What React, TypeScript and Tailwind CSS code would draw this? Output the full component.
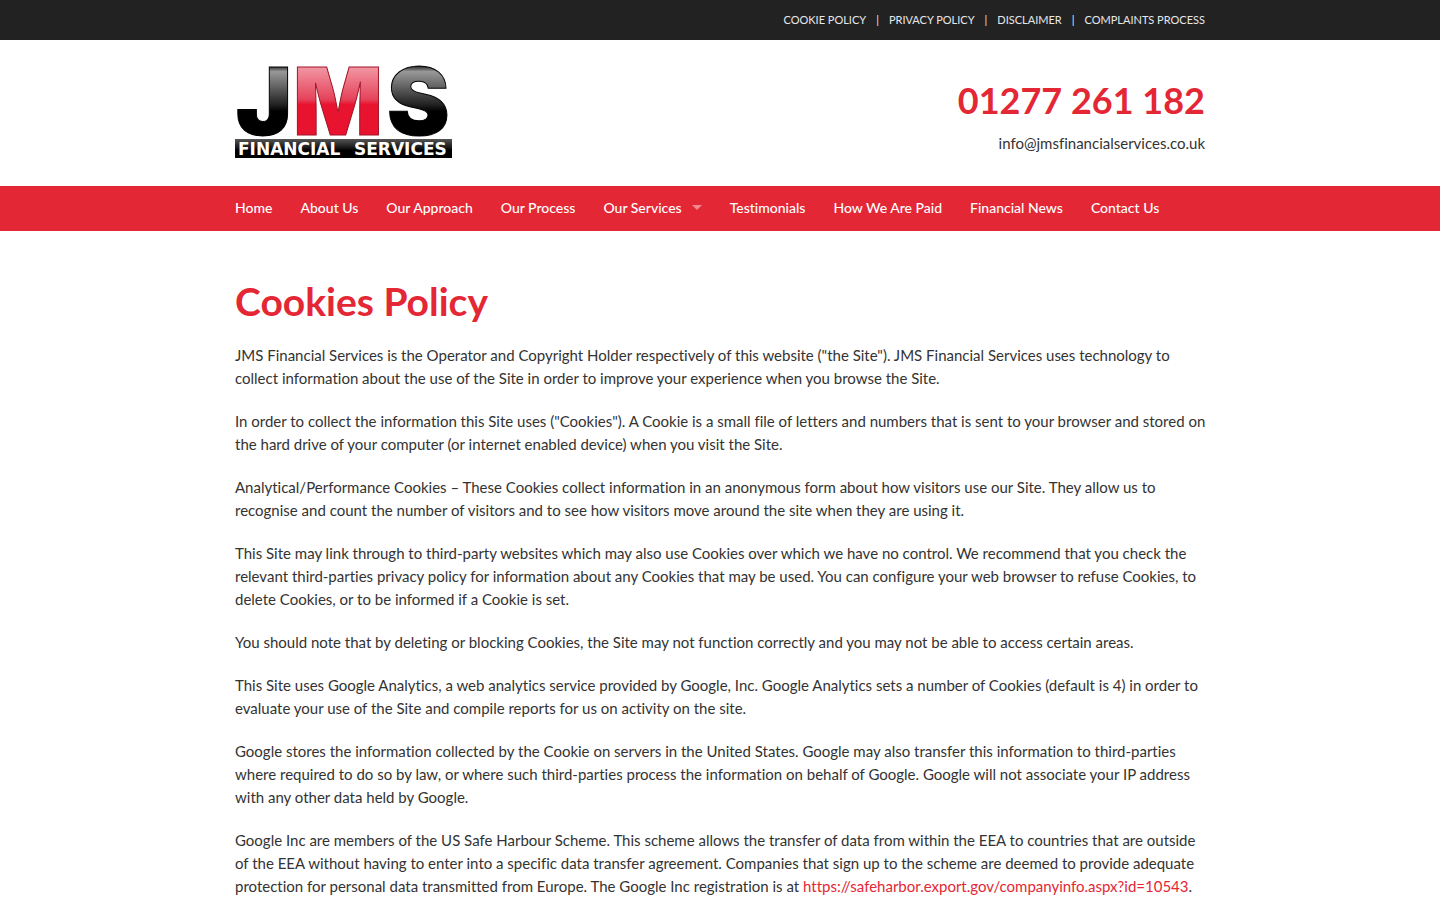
import type { ReactNode } from 'react';

const policyLinks = ['Cookie Policy', 'Privacy Policy', 'Disclaimer', 'Complaints Process'];

const navLinks = [
  { label: 'Home' },
  { label: 'About Us' },
  { label: 'Our Approach' },
  { label: 'Our Process' },
  { label: 'Our Services', hasMenu: true },
  { label: 'Testimonials' },
  { label: 'How We Are Paid' },
  { label: 'Financial News' },
  { label: 'Contact Us' },
];

function Container({ children, className = '' }: { children: ReactNode; className?: string }) {
  return <div className={`mx-auto w-full max-w-[970px] ${className}`}>{children}</div>;
}

function Logo() {
  return (
    <svg
      viewBox="0 0 217 92"
      className="h-[92px] w-[217px] overflow-visible"
      role="img"
      aria-label="JMS Financial Services"
    >
      <defs>
        <linearGradient id="black" gradientUnits="userSpaceOnUse" x1="0" y1="0" x2="0" y2="70">
          <stop offset="0" stopColor="#222" />
          <stop offset="0.08" stopColor="#999" />
          <stop offset="0.55" stopColor="#222" />
          <stop offset="0.65" stopColor="#000" />
        </linearGradient>
        <linearGradient id="red" gradientUnits="userSpaceOnUse" x1="0" y1="0" x2="0" y2="70">
          <stop offset="0" stopColor="#f29aa5" />
          <stop offset="0.48" stopColor="#e5425a" />
          <stop offset="0.55" stopColor="#e8142f" />
        </linearGradient>
        <linearGradient id="bar" x1="0" y1="0" x2="0" y2="1">
          <stop offset="0" stopColor="#555" />
          <stop offset="0.5" stopColor="#111" />
          <stop offset="0.6" stopColor="#000" />
        </linearGradient>
      </defs>
      <g fontFamily="Inter, sans-serif" fontWeight="900" fontSize="94">
        <text x="1" y="69" fill="url(#black)" stroke="#000">J</text>
        <text x="58" y="69" fill="url(#red)" stroke="#a01528">M</text>
        <text x="152" y="69" fill="url(#black)" stroke="#000">S</text>
      </g>
      <rect y="73" width="217" height="19" fill="url(#bar)" />
      <g fontFamily="DejaVu Sans, sans-serif" fontWeight="700" fontSize="17" fill="#fff">
        <text x="3" y="89">FINANCIAL</text>
        <text x="119" y="89">SERVICES</text>
      </g>
    </svg>
  );
}

function TopBar() {
  return (
    <div className="bg-[#222]">
      <Container className="flex h-10 items-center justify-end">
        {policyLinks.map((label, i) => (
          <span key={label} className="flex text-[11px] text-gray-200 uppercase">
            {i > 0 && <span className="px-2.5">|</span>}
            <a href="#">{label}</a>
          </span>
        ))}
      </Container>
    </div>
  );
}

function Header() {
  return (
    <header>
      <Container className="flex items-start justify-between pt-[26px] pb-7">
        <a href="#">
          <Logo />
        </a>
        <div className="flex flex-col items-end pt-2.5">
          <a href="#" className="text-[36px] leading-12 font-bold text-[#e42735]">
            01277 261 182
          </a>
          <a href="#" className="mt-[7px] text-[15px] leading-6 [font-variant-ligatures:none]">
            info@jmsfinancialservices.co.uk
          </a>
        </div>
      </Container>
    </header>
  );
}

function MainNav() {
  return (
    <nav className="bg-[#e42735]">
      <Container>
        <ul className="flex h-[45px] items-center gap-7 pb-0.5 text-[14px] font-medium text-white [font-variant-ligatures:none]">
          {navLinks.map(({ label, hasMenu }) => (
            <li key={label}>
              <a href="#" className="flex items-center gap-2.5">
                {label}
                {hasMenu && (
                  <svg viewBox="0 0 10 5" className="h-[5px] w-2.5 fill-[#f0888f]">
                    <path d="M0 0h10L5 5z" />
                  </svg>
                )}
              </a>
            </li>
          ))}
        </ul>
      </Container>
    </nav>
  );
}

export default function App() {
  return (
    <div className="bg-white font-[Lato,sans-serif] text-[#333]">
      <TopBar />
      <Header />
      <MainNav />
      <main>
        <Container className="pt-[46px]">
          <h1 className="text-[39px] leading-12 font-bold text-[#e42735]">Cookies Policy</h1>
          <div className="mt-[19px] -mr-1 space-y-5 text-[15px] leading-[23px] [font-variant-ligatures:none]">
            <p>
              JMS Financial Services is the Operator and Copyright Holder respectively of this website ("the Site").
              JMS Financial Services uses technology to collect information about the use of the Site in order to
              improve your experience when you browse the Site.
            </p>
            <p>
              In order to collect the information this Site uses ("Cookies"). A Cookie is a small file of letters and
              numbers that is sent to your browser and stored on the hard drive of your computer (or internet enabled
              device) when you visit the Site.
            </p>
            <p>
              Analytical/Performance Cookies – These Cookies collect information in an anonymous form about how
              visitors use our Site. They allow us to recognise and count the number of visitors and to see how
              visitors move around the site when they are using it.
            </p>
            <p>
              This Site may link through to third-party websites which may also use Cookies over which we have no
              control. We recommend that you check the relevant third-parties privacy policy for information about any
              Cookies that may be used. You can configure your web browser to refuse Cookies, to delete Cookies, or to
              be informed if a Cookie is set.
            </p>
            <p>
              You should note that by deleting or blocking Cookies, the Site may not function correctly and you may
              not be able to access certain areas.
            </p>
            <p>
              This Site uses Google Analytics, a web analytics service provided by Google, Inc. Google Analytics sets
              a number of Cookies (default is 4) in order to evaluate your use of the Site and compile reports for us
              on activity on the site.
            </p>
            <p>
              Google stores the information collected by the Cookie on servers in the United States. Google may also
              transfer this information to third-parties where required to do so by law, or where such third-parties
              process the information on behalf of Google. Google will not associate your IP address with any other
              data held by Google.
            </p>
            <p>
              Google Inc are members of the US Safe Harbour Scheme. This scheme allows the transfer of data from
              within the EEA to countries that are outside of the EEA without having to enter into a specific data
              transfer agreement. Companies that sign up to the scheme are deemed to provide adequate protection for
              personal data transmitted from Europe. The Google Inc registration is at{' '}
              <a href="#" className="text-[#e42735]">
                https://safeharbor.export.gov/companyinfo.aspx?id=10543
              </a>
              .
            </p>
          </div>
        </Container>
      </main>
    </div>
  );
}
